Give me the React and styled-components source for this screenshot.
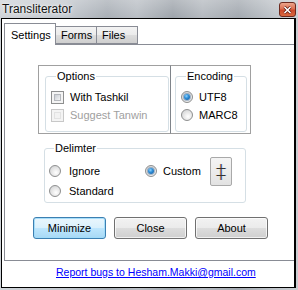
import React from "react";
import styled, { createGlobalStyle } from "styled-components";

const GlobalStyle = createGlobalStyle`
  html, body {
    margin: 0;
    padding: 0;
    background: #fff;
  }
  body {
    font-family: "Liberation Sans", Arial, sans-serif;
    font-size: 11px;
    color: #000;
  }
`;

const Window = styled.div`
  width: 298px;
  height: 290px;
  box-sizing: border-box;
  display: flex;
  flex-direction: column;
  padding: 0 2px 2px 1px;
  overflow: hidden;
  background:
    linear-gradient(180deg, rgba(255, 255, 255, 0.25), rgba(255, 255, 255, 0) 18px),
    linear-gradient(
      90deg,
      #cfd3d8 0%,
      #c3c8ce 22%,
      #a9afb6 36%,
      #b9bec4 46%,
      #9ea4ab 58%,
      #b4b9bf 68%,
      #a3a9b0 80%,
      #bfc4c9 92%,
      #c9cdd1 100%
    );
`;

const TitleBar = styled.div`
  height: 18px;
  flex: none;
  display: flex;
  align-items: center;
  justify-content: space-between;
  padding-left: 1px;
`;

const Title = styled.span`
  font-size: 12px;
  color: #111;
  text-shadow: 0 0 5px rgba(255, 255, 255, 0.9), 0 0 2px rgba(255, 255, 255, 0.9);
`;

const CloseBox = styled.div`
  width: 17px;
  height: 15px;
  box-sizing: border-box;
  margin-top: 1px;
  border: 1px solid #6d2a1f;
  border-radius: 3px;
  background: linear-gradient(180deg, #eba58c 0%, #de7052 45%, #cb4a2c 55%, #d9683f 100%);
  display: flex;
  align-items: center;
  justify-content: center;
`;

const Client = styled.div`
  flex: 1;
  display: flex;
  flex-direction: column;
  background: #fff;
  border: 1px solid #000;
  border-right-width: 2px;
  padding: 4px 0 0 2px;
  min-height: 0;
`;

const TabStrip = styled.div`
  display: flex;
  align-items: flex-end;
  height: 22px;
  margin-bottom: -1px;
  position: relative;
  z-index: 1;
`;

const Tab = styled.div`
  box-sizing: border-box;
  width: ${(p) => p.$w}px;
  height: ${(p) => (p.$active ? "22px" : "18px")};
  margin-bottom: ${(p) => (p.$active ? "0" : "1px")};
  padding-left: ${(p) => (p.$active ? "6px" : "5px")};
  display: flex;
  align-items: center;
  border: 1px solid #898c95;
  border-left-width: ${(p) => (p.$noLeft ? "0" : "1px")};
  border-bottom-width: ${(p) => (p.$active ? "0" : "1px")};
  background: ${(p) =>
    p.$active
      ? "#fff"
      : "linear-gradient(180deg, #f3f3f3 0%, #ebebeb 50%, #dddddd 51%, #cfcfcf 100%)"};
  position: relative;
  z-index: ${(p) => (p.$active ? 2 : 1)};
`;

const TabPanel = styled.div`
  flex: none;
  height: 217px;
  box-sizing: border-box;
  border: 1px solid #898c95;
  border-right: none;
  background: #fff;
  display: flex;
  flex-direction: column;
  align-items: flex-start;
`;

const OptionsBox = styled.div`
  display: flex;
  margin: 20px 0 0 33px;
  height: 69px;
`;

const Cell = styled.div`
  box-sizing: border-box;
  display: flex;
  flex-direction: column;
  width: ${(p) => p.$w}px;
  border: 1px solid #a0a0a0;
  border-left: ${(p) => (p.$first ? "1px solid #a0a0a0" : "none")};
  border-right-color: ${(p) => (p.$first ? "#7f848a" : "#a0a0a0")};
  padding: 4px 0 1px ${(p) => p.$pl}px;
`;

const Group = styled.fieldset`
  margin: 0;
  min-width: 0;
  box-sizing: border-box;
  width: ${(p) => p.$w}px;
  flex: ${(p) => (p.$fill ? 1 : "none")};
  border: 1px solid #d5dfe5;
  border-radius: 3px;
  padding: 0 4px 1px ${(p) => p.$pl}px;
`;

const Legend = styled.legend`
  padding: 0 1px;
  margin-left: 5px;
  line-height: 13px;
  font-size: 11px;
`;

const Rows = styled.div`
  display: flex;
  flex-direction: column;
  margin-top: ${(p) => p.$mt}px;
`;

const Row = styled.label`
  display: flex;
  align-items: center;
  height: ${(p) => p.$h || 18}px;
  gap: ${(p) => p.$gap || 6}px;
  color: ${(p) => (p.$disabled ? "#a0a0a0" : "#000")};
  white-space: nowrap;
`;

const CheckBox = styled.span`
  width: 13px;
  height: 13px;
  box-sizing: border-box;
  flex: none;
  border: 1px solid ${(p) => (p.$disabled ? "#c8c8c8" : "#8e8f8f")};
  background: #f4f4f4;
  padding: 2px;
  display: flex;

  &::after {
    content: "";
    flex: 1;
    border: 1px solid ${(p) => (p.$disabled ? "#e2e2e2" : "#b5b8bd")};
    background: ${(p) =>
      p.$disabled
        ? "#f2f2f2"
        : "linear-gradient(135deg, #c9cdd3 0%, #e3e5e8 60%, #f4f4f4 100%)"};
  }
`;

const Radio = styled.span`
  width: 12px;
  height: 12px;
  box-sizing: border-box;
  flex: none;
  border-radius: 50%;
  border: 1px solid #8e8f8f;
  background: radial-gradient(circle at 60% 65%, #ffffff 0%, #e8e8e8 45%, #c9cbce 100%);
  display: flex;
  align-items: center;
  justify-content: center;

  &::after {
    content: "";
    display: ${(p) => (p.$checked ? "block" : "none")};
    width: 6px;
    height: 6px;
    border-radius: 50%;
    background: radial-gradient(circle at 40% 35%, #8fd3ff 0%, #2f8fd8 40%, #0d4f93 100%);
    box-shadow: 0 0 0 1px rgba(20, 70, 120, 0.35);
  }
`;

const DelimGroup = styled(Group)`
  margin: 8px 0 0 39px;
`;

const DelimBody = styled.div`
  display: flex;
  align-items: flex-start;
  margin-top: 6px;
`;

const DelimCol = styled.div`
  display: flex;
  flex-direction: column;
  width: 96px;
`;

const CustomCol = styled.div`
  display: flex;
  align-items: center;
  margin-top: -4px;
  height: 28px;
  gap: 9px;
`;

const GlyphButton = styled.div`
  box-sizing: border-box;
  width: 22px;
  height: 29px;
  border: 1px solid #a9a9a9;
  border-radius: 2px;
  background: linear-gradient(180deg, #f4f4f4 0%, #ececec 50%, #e2e2e2 100%);
  display: flex;
  align-items: center;
  justify-content: center;
  font-family: "DejaVu Sans", "Liberation Sans", sans-serif;
  font-weight: 200;
  font-size: 20px;
  line-height: 1;
  color: #333;
  text-shadow: -0.5px 0 0 rgba(230, 140, 40, 0.55), 0.5px 0 0 rgba(40, 110, 220, 0.55);
`;

const ButtonRow = styled.div`
  display: flex;
  gap: 8px;
  margin: 14px 0 0 28px;
`;

const Button = styled.div`
  box-sizing: border-box;
  width: 73px;
  height: 22px;
  display: flex;
  align-items: center;
  justify-content: center;
  border-radius: 3px;
  border: 1px solid ${(p) => (p.$focused ? "#3c7fb1" : "#707070")};
  background: ${(p) =>
    p.$focused
      ? "linear-gradient(180deg, #eaf6fd 0%, #d9f0fc 50%, #bee6fd 51%, #a7d9f5 100%)"
      : "linear-gradient(180deg, #f2f2f2 0%, #ebebeb 50%, #dddddd 51%, #cfcfcf 100%)"};
  box-shadow: inset 0 0 0 1px
    ${(p) => (p.$focused ? "rgba(160, 220, 250, 0.9)" : "rgba(255, 255, 255, 0.7)")};
`;

const LinkRow = styled.div`
  padding: 5px 0 0 52px;
  line-height: 13px;
`;

const ReportLink = styled.a`
  color: #0000ff;
  text-decoration: underline;
  font-size: 10.5px;
`;

export default function App() {
  return (
    <>
      <GlobalStyle />
      <Window>
        <TitleBar>
          <Title>Transliterator</Title>
          <CloseBox>
            <svg width="9" height="8" viewBox="0 0 9 8">
              <path d="M1.5 1 L7.5 7 M7.5 1 L1.5 7" stroke="#5a1a10" strokeWidth="3" />
              <path d="M1.5 1 L7.5 7 M7.5 1 L1.5 7" stroke="#fff" strokeWidth="1.6" />
            </svg>
          </CloseBox>
        </TitleBar>
        <Client>
          <TabStrip>
            <Tab $active $w={52}>Settings</Tab>
            <Tab $w={41} $noLeft>Forms</Tab>
            <Tab $w={41} $noLeft>Files</Tab>
          </TabStrip>
          <TabPanel>
            <OptionsBox>
              <Cell $first $w={133} $pl={6}>
                <Group $w={124} $pl={5} $fill>
                  <Legend>Options</Legend>
                  <Rows $mt={5}>
                    <Row>
                      <CheckBox />
                      With Tashkil
                    </Row>
                    <Row $disabled>
                      <CheckBox $disabled />
                      Suggest Tanwin
                    </Row>
                  </Rows>
                </Group>
              </Cell>
              <Cell $w={80} $pl={4}>
                <Group $w={72} $pl={5} $fill>
                  <Legend>Encoding</Legend>
                  <Rows $mt={5}>
                    <Row>
                      <Radio $checked />
                      UTF8
                    </Row>
                    <Row>
                      <Radio />
                      MARC8
                    </Row>
                  </Rows>
                </Group>
              </Cell>
            </OptionsBox>

            <DelimGroup $w={202} $pl={4}>
              <Legend>Delimter</Legend>
              <DelimBody>
                <DelimCol>
                  <Row $h={20} $gap={8}>
                    <Radio />
                    Ignore
                  </Row>
                  <Row $h={20} $gap={8}>
                    <Radio />
                    Standard
                  </Row>
                </DelimCol>
                <CustomCol>
                  <Row $h={20} $gap={6}>
                    <Radio $checked />
                    Custom
                  </Row>
                  <GlyphButton>‡</GlyphButton>
                </CustomCol>
              </DelimBody>
            </DelimGroup>

            <ButtonRow>
              <Button $focused>Minimize</Button>
              <Button>Close</Button>
              <Button>About</Button>
            </ButtonRow>
          </TabPanel>
          <LinkRow>
            <ReportLink href="#">Report bugs to Hesham.Makki@gmail.com</ReportLink>
          </LinkRow>
        </Client>
      </Window>
    </>
  );
}
